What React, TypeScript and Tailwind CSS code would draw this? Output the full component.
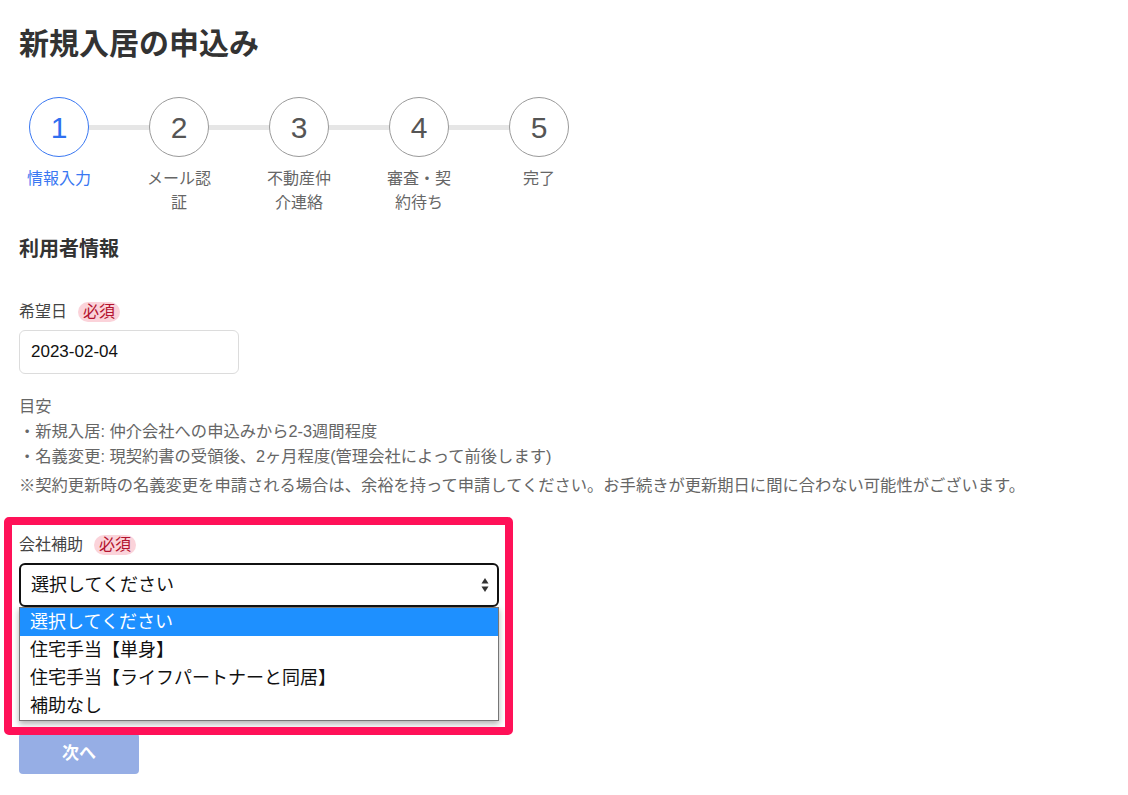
import React from "react";

const STEPS = [
  { n: 1, label: "情報入力" },
  { n: 2, label: "メール認証" },
  { n: 3, label: "不動産仲介連絡" },
  { n: 4, label: "審査・契約待ち" },
  { n: 5, label: "完了" },
];

const OPTIONS = [
  "選択してください",
  "住宅手当【単身】",
  "住宅手当【ライフパートナーと同居】",
  "補助なし",
];

function Required() {
  return (
    <span className="ml-[11px] inline-block rounded-full bg-[#fbd3da] px-[5px] text-[16px] leading-[20px] text-[#b3142f]">
      必須
    </span>
  );
}

function Stepper() {
  return (
    <div className="relative mt-[31px] flex w-[560px] gap-[40px]">
      {/* connector line behind circles */}
      <div className="absolute left-[40px] right-[40px] top-[28px] h-[5px] bg-[#e6e6e6]" />
      {STEPS.map((s) => {
        const active = s.n === 1;
        return (
          <div key={s.n} className="relative flex w-[80px] flex-col items-center">
            <div
              className={
                active
                  ? "flex h-[60px] w-[60px] items-center justify-center rounded-full border border-[#3a78f2] bg-white text-[30px] text-[#2f6ff0]"
                  : "flex h-[60px] w-[60px] items-center justify-center rounded-full border border-[#9a9a9a] bg-white text-[30px] text-[#555]"
              }
            >
              {s.n}
            </div>
            <div
              className={
                active
                  ? "mt-[10px] w-[68px] text-center text-[16px] leading-[24px] text-[#3a78f2]"
                  : "mt-[10px] w-[68px] text-center text-[16px] leading-[24px] text-[#666]"
              }
            >
              {s.label}
            </div>
          </div>
        );
      })}
    </div>
  );
}

export default function App() {
  return (
    <div
      className="relative min-h-screen bg-white px-[19px] pt-[22px] text-[#333]"
      style={{ fontFamily: '"Liberation Sans", "Noto Sans CJK JP", sans-serif' }}
    >
      <h1 className="text-[30px] font-bold leading-[44px] text-[#333]">新規入居の申込み</h1>

      <Stepper />

      <h2 className="mt-[20px] text-[20px] font-bold leading-[28px] text-[#333]">利用者情報</h2>

      {/* 希望日 */}
      <div className="mt-[37px] flex items-center text-[16px] leading-[24px] text-[#444]">
        希望日
        <Required />
      </div>
      <div className="mt-[6px] flex h-[44px] w-[220px] items-center rounded-[6px] border border-[#dcdcdc] px-[11px] text-[17px] text-[#111]">
        2023-02-04
      </div>

      <div className="mt-[20px] text-[16.3px] leading-[25px] text-[#666]">
        <div>目安</div>
        <div>・新規入居: 仲介会社への申込みから2-3週間程度</div>
        <div>・名義変更: 現契約書の受領後、2ヶ月程度(管理会社によって前後します)</div>
        <div className="mt-[4px]">
          ※契約更新時の名義変更を申請される場合は、余裕を持って申請してください。お手続きが更新期日に間に合わない可能性がございます。
        </div>
      </div>

      {/* 会社補助 */}
      <div className="mt-[35px] flex items-center text-[16px] leading-[24px] text-[#444]">
        会社補助
        <Required />
      </div>
      <div className="relative mt-[6px] w-[480px]">
        <div className="flex h-[44px] items-center justify-between rounded-[6px] border-2 border-[#111] pl-[10px] pr-[8px] text-[18px] text-[#111]">
          <span>選択してください</span>
          <svg width="8" height="16" viewBox="0 0 8 16">
            <path d="M4 1 L7.5 6.5 H0.5 Z" fill="#333" />
            <path d="M4 15 L7.5 9.5 H0.5 Z" fill="#333" />
          </svg>
        </div>
        {/* open dropdown list */}
        <div className="absolute left-0 right-0 top-[44px] z-10 border border-[#767676] bg-white shadow-[0_3px_6px_rgba(0,0,0,0.3)]">
          {OPTIONS.map((o, i) => (
            <div
              key={o}
              className={
                i === 0
                  ? "flex h-[28px] items-center bg-[#1e90ff] pl-[10px] text-[18px] text-white"
                  : "flex h-[28px] items-center pl-[10px] text-[18px] text-[#111]"
              }
            >
              {o}
            </div>
          ))}
        </div>
      </div>

      <button className="mt-[126px] h-[41px] w-[120px] rounded-[4px] bg-[#96aee5] text-[17px] font-bold text-white">
        次へ
      </button>

      {/* highlight annotation */}
      <div className="pointer-events-none absolute left-[4px] top-[517px] z-20 h-[218px] w-[509px] rounded-[5px] border-[8px] border-[#ff1158]" />
    </div>
  );
}
